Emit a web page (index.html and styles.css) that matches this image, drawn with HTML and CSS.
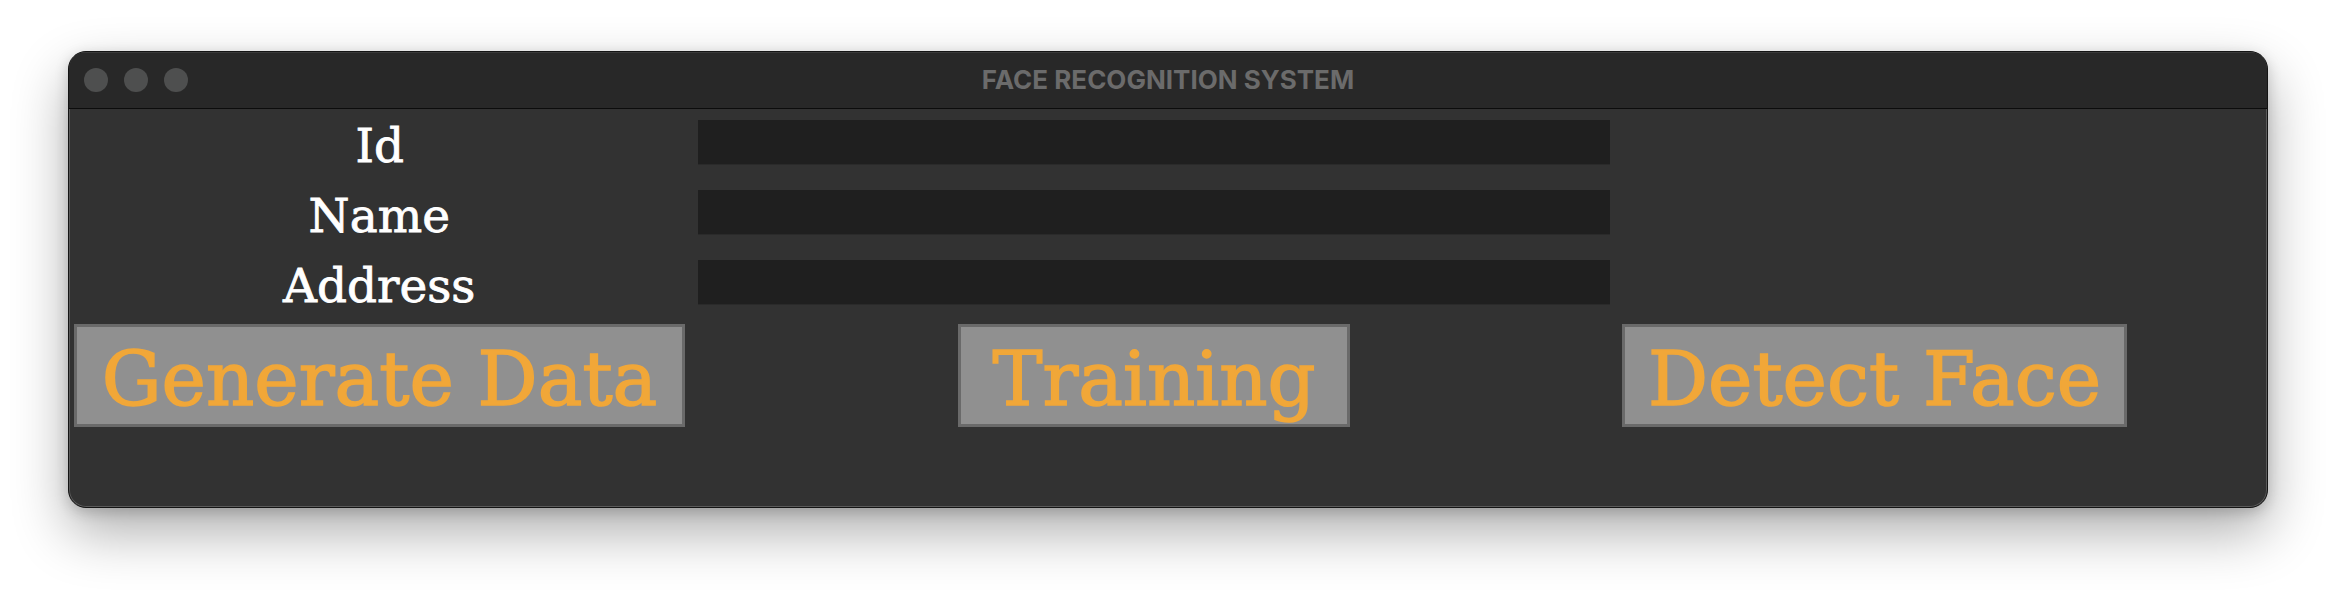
FILE: index.html
```html
<!DOCTYPE html>
<html>
<head>
<meta charset="utf-8">
<title>FACE RECOGNITION SYSTEM</title>
<link rel="stylesheet" href="styles.css">
</head>
<body>
<div class="window">
  <div class="titlebar">
    <div class="lights">
      <span class="light"></span>
      <span class="light"></span>
      <span class="light"></span>
    </div>
    <div class="title">FACE RECOGNITION SYSTEM</div>
    <div class="titlebar-end"></div>
  </div>
  <div class="content">
    <div class="label"><span class="type">Id</span></div>
    <div class="field"><div class="entry"></div></div>
    <div class="label"><span class="type">Name</span></div>
    <div class="field"><div class="entry"></div></div>
    <div class="label"><span class="type">Address</span></div>
    <div class="field"><div class="entry"></div></div>
    <div class="btn-cell btn-cell-1"><div class="btn btn-generate"><span class="btn-text">Generate Data</span></div></div>
    <div class="btn-cell btn-cell-2"><div class="btn btn-training"><span class="btn-text">Training</span></div></div>
    <div class="btn-cell btn-cell-3"><div class="btn btn-detect"><span class="btn-text">Detect Face</span></div></div>
  </div>
</div>
</body>
</html>
```
FILE: styles.css
```css
html, body {
  margin: 0;
  padding: 0;
  background: #ffffff;
}
body {
  width: 2336px;
  height: 592px;
  padding: 51px 0 0 68px;
  box-sizing: border-box;
  overflow: hidden;
}
.window {
  width: 2200px;
  height: 457px;
  box-sizing: border-box;
  border: 1px solid #141414;
  border-radius: 18px;
  background: #323232;
  overflow: hidden;
  box-shadow: 0 24px 55px rgba(0, 0, 0, 0.32), 0 4px 14px rgba(0, 0, 0, 0.18), inset 0 0 0 1px #5a5a5a;
  display: flex;
  flex-direction: column;
}
.titlebar {
  height: 56px;
  flex: 0 0 56px;
  background: #282828;
  border-bottom: 1px solid #0c0c0c;
  display: grid;
  grid-template-columns: 1fr auto 1fr;
  align-items: center;
  box-shadow: inset 0 1px 0 #3a3a3a;
}
.lights {
  display: flex;
  gap: 16px;
  padding-left: 15px;
  padding-bottom: 1px;
}
.light {
  width: 24px;
  height: 24px;
  border-radius: 50%;
  background: #4e4f4f;
}
.title {
  font-family: Inter, "Liberation Sans", sans-serif;
  font-weight: 700;
  font-size: 26px;
  color: #6b6b6b;
  letter-spacing: 0;
  padding-bottom: 2px;
}
.content {
  flex: 1;
  display: grid;
  grid-template-columns: 621px 928px 513px 1fr;
  grid-template-rows: 70px 70px 70px auto;
  align-content: start;
}
.label {
  grid-column: 1;
  display: flex;
  justify-content: center;
  align-items: center;
  color: #ffffff;
}
.type {
  display: inline-block;
  font-family: "DejaVu Serif", "Liberation Serif", serif;
  font-weight: 400;
  font-size: 46px;
  line-height: 1;
  -webkit-text-stroke: 0.8px #ffffff;
  transform: scaleX(1.02);
  transform-origin: center;
  position: relative;
  top: 2px;
}
.field {
  grid-column: 2;
  padding: 11px 8px 15px 8px;
}
.entry {
  height: 44px;
  background: #1f1f1f;
  box-shadow: 0 1px 0 #2a2a2a;
}
.btn-cell {
  padding-top: 5px;
  display: flex;
  justify-content: center;
}
.btn-cell-1 { grid-column: 1; }
.btn-cell-2 { grid-column: 2; }
.btn-cell-3 { grid-column: 3; }
.btn {
  height: 103px;
  box-sizing: border-box;
  background: #909090;
  border: 3px solid #6a6a6a;
  display: flex;
  justify-content: center;
  align-items: center;
  color: #f1a738;
}
.btn-generate { width: 611px; }
.btn-training { width: 392px; }
.btn-detect { width: 505px; }
.btn-text {
  display: inline-block;
  font-family: "DejaVu Serif", "Liberation Serif", serif;
  font-weight: 400;
  font-size: 75px;
  line-height: 1;
  white-space: pre;
  -webkit-text-stroke: 1.5px #f1a738;
  transform-origin: center;
  position: relative;
  top: 4px;
}
```
